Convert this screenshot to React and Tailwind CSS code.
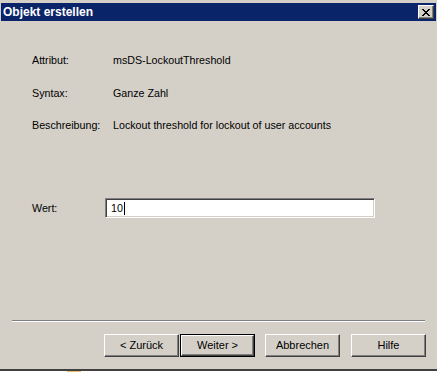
import React from "react";

const btn =
  "w-[75px] h-[23px] bg-[#d4d0c8] text-black text-[11px] leading-none flex items-center justify-center border border-t-white border-l-white border-r-[#404040] border-b-[#404040] shadow-[inset_-1px_-1px_0_#808080]";

export default function App() {
  return (
    <div
      className="w-[437px] h-[372px] bg-[#d4d0c8] flex flex-col overflow-hidden text-black"
      style={{ fontFamily: '"Liberation Sans", Arial, sans-serif' }}
    >
      {/* title bar */}
      <div className="mt-[3px] mx-[1px] h-[18px] bg-[#0a246a] flex items-center justify-between pl-[2px] pr-[2px]">
        <span className="text-white font-bold text-[12px] leading-none">
          Objekt erstellen
        </span>
        <div className="w-[16px] h-[14px] bg-[#d4d0c8] border border-t-white border-l-white border-r-[#404040] border-b-[#404040] shadow-[inset_-1px_-1px_0_#808080] flex items-center justify-center">
          <svg width="8" height="7" viewBox="0 0 8 7" shapeRendering="crispEdges">
            <path
              d="M0 0h2v1h-2zM6 0h2v1h-2zM1 1h2v1h-2zM5 1h2v1h-2zM2 2h4v1h-4zM3 3h2v1h-2zM2 4h4v1h-4zM1 5h2v1h-2zM5 5h2v1h-2zM0 6h2v1h-2zM6 6h2v1h-2z"
              fill="#000"
            />
          </svg>
        </div>
      </div>

      {/* content */}
      <div className="flex flex-col text-[10.7px] leading-[13px]">
        <div className="flex mt-[33px] h-[13px]">
          <span className="w-[81px] pl-[32px] box-content shrink-0">Attribut:</span>
          <span>msDS-LockoutThreshold</span>
        </div>
        <div className="flex mt-[20px] h-[13px]">
          <span className="w-[81px] pl-[32px] box-content shrink-0">Syntax:</span>
          <span>Ganze Zahl</span>
        </div>
        <div className="flex mt-[19px] h-[13px]">
          <span className="w-[81px] pl-[32px] box-content shrink-0">Beschreibung:</span>
          <span>Lockout threshold for lockout of user accounts</span>
        </div>
        <div className="flex items-center mt-[66px] h-[20px]">
          <span className="w-[73px] pl-[32px] box-content shrink-0">Wert:</span>
          <div className="w-[270px] h-[20px] bg-white border border-t-[#808080] border-l-[#808080] border-b-white border-r-white shadow-[inset_1px_1px_0_#404040,inset_-1px_-1px_0_#d4d0c8] flex items-center pl-[5px]">
            <span>10</span>
            <span className="w-[1px] h-[13px] bg-black ml-[1px]" />
          </div>
        </div>
      </div>

      {/* separator */}
      <div className="mt-[102px] mx-[12px] h-[2px] border-t border-t-[#808080] border-b border-b-white" />

      {/* buttons */}
      <div className="flex justify-end pr-[11px] mt-[12px]">
        <div className={btn}>&lt; Zurück</div>
        <div className="ml-[1px] w-[75px] h-[23px] border border-black">
          <div className="w-full h-full bg-[#d4d0c8] text-[11px] leading-none flex items-center justify-center border border-t-white border-l-white border-r-[#404040] border-b-[#404040] shadow-[inset_-1px_-1px_0_#808080]">
            Weiter &gt;
          </div>
        </div>
        <div className={btn + " ml-[10px]"}>Abbrechen</div>
        <div className={btn + " ml-[11px]"}>Hilfe</div>
      </div>

      {/* bottom edge of dialog and underlying window */}
      <div className="mt-auto h-[1px] bg-[#404040]" />
      <div className="h-[1px] bg-[#404040]" />
      <div className="h-[1px] bg-white flex">
        <div className="ml-[67px] w-[14px] bg-[#e8c06a]" />
      </div>
    </div>
  );
}
